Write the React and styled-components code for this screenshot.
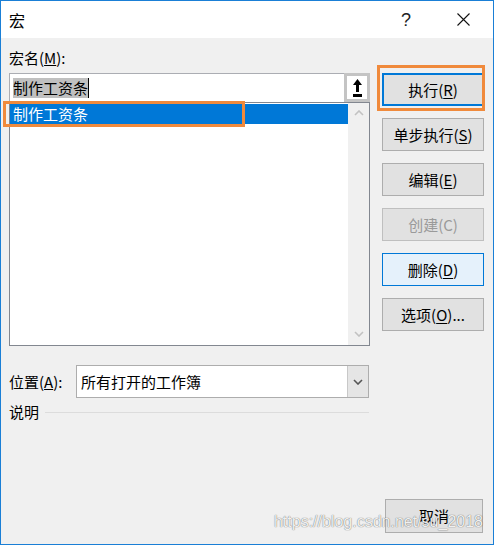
import React from "react";
import styled, { createGlobalStyle } from "styled-components";

const GlobalStyle = createGlobalStyle`
  html, body {
    margin: 0;
    padding: 0;
    background: #ffffff;
  }
  body {
    font-family: "Noto Sans CJK SC", "Noto Sans", sans-serif;
    color: #000;
  }
`;

const Window = styled.div`
  width: 494px;
  height: 545px;
  box-sizing: border-box;
  border: 1px solid #1a7fd6;
  display: flex;
  flex-direction: column;
  background: #f0f0f0;
  font-size: 15px;
`;

const TitleBar = styled.div`
  height: 37px;
  flex: none;
  background: #ffffff;
  display: flex;
  align-items: center;
  padding: 0 23px 0 8px;
`;

const Title = styled.span`
  font-size: 16px;
  line-height: 20px;
  flex: 1;
`;

const Help = styled.span`
  font-family: "Liberation Sans", Arial, sans-serif;
  font-size: 18px;
  line-height: 20px;
  color: #222;
  margin-right: 46px;
`;

const Body = styled.div`
  flex: 1;
  display: flex;
  padding: 0 9px 0 8px;
  position: relative;
`;

const LeftCol = styled.div`
  width: 361px;
  padding-top: 10px;
  display: flex;
  flex-direction: column;
`;

const Label = styled.div`
  line-height: 20px;
  margin-bottom: ${(p) => p.$mb || 0}px;
`;

const InputRow = styled.div`
  display: flex;
  height: 29px;
`;

const InputBox = styled.div`
  flex: 1;
  border: 1px solid #abadb3;
  border-right: none;
  border-bottom: none;
  background: #fff;
  display: flex;
  align-items: center;
  padding-left: 3px;
`;

const Selected = styled.span`
  background: #c0c0c0;
  line-height: 20px;
  border-right: 1px solid #000;
`;

const UpButton = styled.div`
  width: 26px;
  box-sizing: border-box;
  border: 3px solid #c4c4c4;
  background: #fff;
  display: flex;
  align-items: center;
  justify-content: center;
`;

const List = styled.div`
  height: 244px;
  box-sizing: border-box;
  border: 1px solid #828790;
  background: #fff;
  display: flex;
`;

const Items = styled.div`
  flex: 1;
  padding-top: 1px;
`;

const Item = styled.div`
  position: relative;
  height: 20px;
  line-height: 20px;
  padding-left: 3px;
  background: ${(p) => (p.$active ? "#0078d7" : "transparent")};
  color: ${(p) => (p.$active ? "#fff" : "#000")};
`;

const Mark = styled.div`
  position: absolute;
  box-sizing: border-box;
  border: 3px solid #f08a3c;
  pointer-events: none;
`;

const Scrollbar = styled.div`
  width: 21px;
  background: #f0f0f0;
  display: flex;
  flex-direction: column;
  justify-content: space-between;
  align-items: center;
  padding: 7px 0 8px;
`;

const LocationRow = styled.div`
  display: flex;
  align-items: center;
  margin-top: 19px;
  height: 33px;
`;

const LocLabel = styled.span`
  width: 67px;
  line-height: 20px;
`;

const Select = styled.div`
  flex: 1;
  height: 33px;
  margin-right: 1px;
  box-sizing: border-box;
  border: 1px solid #adadad;
  background: #fff;
  display: flex;
  align-items: stretch;
`;

const SelectText = styled.span`
  flex: 1;
  padding-left: 4px;
  line-height: 31px;
`;

const DropButton = styled.span`
  width: 20px;
  background: #e5e5e5;
  border-left: 1px solid #c8c8c8;
  display: flex;
  align-items: center;
  justify-content: center;
`;

const DescRow = styled.div`
  display: flex;
  align-items: center;
  margin-top: 4px;
  line-height: 20px;
`;

const Rule = styled.span`
  flex: 1;
  height: 1px;
  background: #dcdcdc;
  margin: 0 1px 0 6px;
`;

const RightCol = styled.div`
  width: 102px;
  margin-left: 12px;
  padding-top: 35px;
  display: flex;
  flex-direction: column;
  gap: 12px;
`;

const Button = styled.div`
  position: relative;
  height: 33px;
  box-sizing: border-box;
  display: flex;
  align-items: center;
  justify-content: center;
  border: ${(p) => (p.$default ? "2px solid #0078d7" : p.$hover ? "1px solid #0078d7" : p.$disabled ? "1px solid #bfbfbf" : "1px solid #adadad")};
  background: ${(p) => (p.$hover ? "#e5f1fb" : "#e1e1e1")};
  color: ${(p) => (p.$disabled ? "#9a9a9a" : "#000")};
  line-height: 20px;

  u {
    text-underline-offset: 2px;
  }
`;

const CancelButton = styled(Button)`
  margin-top: auto;
  margin-bottom: 11px;
  margin-left: 3px;
  width: 98px;
  height: 34px;
`;

const Watermark = styled.div`
  position: absolute;
  right: 10px;
  bottom: 13px;
  font-family: "Liberation Sans", Arial, sans-serif;
  font-size: 16px;
  line-height: 18px;
  color: rgba(255, 255, 255, 0.92);
  text-shadow: 0 0 1px rgba(0, 0, 0, 0.5), 0 0 1px rgba(0, 0, 0, 0.3);
  pointer-events: none;
`;

const Chevron = ({ up, color = "#c2c2c2" }) => (
  <svg width="10" height="6" viewBox="0 0 10 6">
    <polyline
      points={up ? "1,5 5,1 9,5" : "1,1 5,5 9,1"}
      fill="none"
      stroke={color}
      strokeWidth="1.6"
    />
  </svg>
);

export default function App() {
  return (
    <>
      <GlobalStyle />
      <Window>
        <TitleBar>
          <Title>宏</Title>
          <Help>?</Help>
          <svg width="13" height="13" viewBox="0 0 13 13">
            <path d="M0.5 0.5 L12.5 12.5 M12.5 0.5 L0.5 12.5" stroke="#111" strokeWidth="1.1" />
          </svg>
        </TitleBar>
        <Body>
          <LeftCol>
            <Label $mb={5}>
              宏名(<u>M</u>):
            </Label>
            <InputRow>
              <InputBox>
                <Selected>制作工资条</Selected>
              </InputBox>
              <UpButton>
                <svg width="9" height="18" viewBox="0 0 9 18">
                  <polygon points="4.5,0 9,6 0,6" fill="#000" />
                  <rect x="3" y="6" width="3" height="7" fill="#000" />
                  <rect x="0" y="15" width="9" height="3" fill="#000" />
                </svg>
              </UpButton>
            </InputRow>
            <List>
              <Items>
                <Item $active>
                  制作工资条
                  <Mark style={{ left: -7, top: -3, width: 242, height: 26 }} />
                </Item>
              </Items>
              <Scrollbar>
                <Chevron up />
                <Chevron />
              </Scrollbar>
            </List>
            <LocationRow>
              <LocLabel>
                位置(<u>A</u>):
              </LocLabel>
              <Select>
                <SelectText>所有打开的工作簿</SelectText>
                <DropButton>
                  <Chevron color="#555" />
                </DropButton>
              </Select>
            </LocationRow>
            <DescRow>
              说明
              <Rule />
            </DescRow>
          </LeftCol>
          <RightCol>
            <Button $default>
              执行(<u>R</u>)
              <Mark style={{ left: -7, top: -10, right: -3, bottom: -7 }} />
            </Button>
            <Button>
              单步执行(<u>S</u>)
            </Button>
            <Button>
              编辑(<u>E</u>)
            </Button>
            <Button $disabled>创建(C)</Button>
            <Button $hover>
              删除(<u>D</u>)
            </Button>
            <Button>
              选项(<u>O</u>)...
            </Button>
            <CancelButton>取消</CancelButton>
          </RightCol>
          <Watermark>https://blog.csdn.net/su_2018</Watermark>
        </Body>
      </Window>
    </>
  );
}
